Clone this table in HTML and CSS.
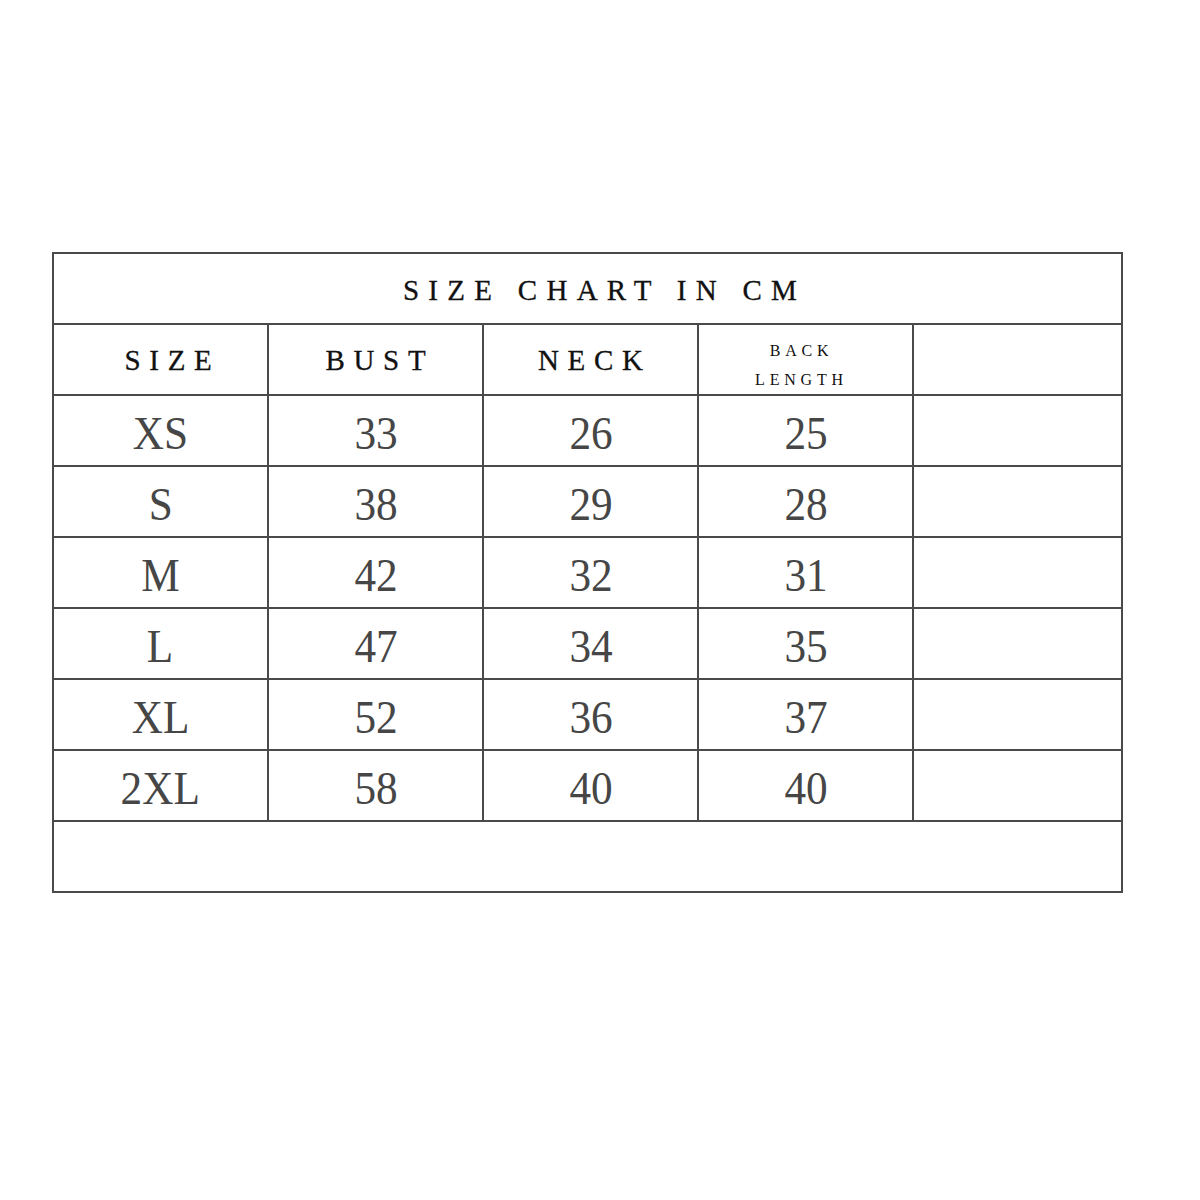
FILE: index.html
```html
<!DOCTYPE html>
<html>
<head>
<meta charset="utf-8">
<link rel="stylesheet" href="styles.css">
</head>
<body>
<div class="page">
  <table class="chart">
    <colgroup>
      <col class="c"><col class="c"><col class="c"><col class="c"><col class="c-last">
    </colgroup>
    <tr class="title-row"><td colspan="5" class="title">SIZE CHART IN CM</td></tr>
    <tr class="head-row">
      <td class="head shift">SIZE</td>
      <td class="head">BUST</td>
      <td class="head">NECK</td>
      <td class="head small">BACK<br>LENGTH</td>
      <td class="head"></td>
    </tr>
    <tr><td><span class="v">XS</span></td><td><span class="v">33</span></td><td><span class="v">26</span></td><td><span class="v">25</span></td><td></td></tr>
    <tr><td><span class="v">S</span></td><td><span class="v">38</span></td><td><span class="v">29</span></td><td><span class="v">28</span></td><td></td></tr>
    <tr><td><span class="v">M</span></td><td><span class="v">42</span></td><td><span class="v">32</span></td><td><span class="v">31</span></td><td></td></tr>
    <tr><td><span class="v">L</span></td><td><span class="v">47</span></td><td><span class="v">34</span></td><td><span class="v">35</span></td><td></td></tr>
    <tr><td><span class="v">XL</span></td><td><span class="v">52</span></td><td><span class="v">36</span></td><td><span class="v">37</span></td><td></td></tr>
    <tr><td><span class="v">2XL</span></td><td><span class="v">58</span></td><td><span class="v">40</span></td><td><span class="v">40</span></td><td></td></tr>
    <tr class="empty-row"><td colspan="5"></td></tr>
  </table>
</div>
</body>
</html>
```
FILE: styles.css
```css
html, body {
  margin: 0;
  padding: 0;
  background: #ffffff;
}
.page {
  padding: 252px 0 0 52px;
}
.chart {
  border-collapse: collapse;
  table-layout: fixed;
  width: 1069px;
  font-family: "Liberation Serif", "DejaVu Serif", serif;
}
.c { width: 215px; }
.c-last { width: 209px; }
.chart td {
  border: 2px solid #4a4a4a;
  height: 69px;
  padding: 0;
  text-align: center;
  vertical-align: middle;
}
.title {
  font-size: 29px;
  letter-spacing: 0.32em;
  color: #111;
  height: 65px !important;
  padding: 4px 0 0 34px !important;
  -webkit-text-stroke: 0.3px #111;
}
.head {
  font-size: 29px;
  letter-spacing: 0.3em;
  color: #111;
  height: 67px !important;
  padding: 2px 0 0 0.3em !important;
  -webkit-text-stroke: 0.3px #111;
}
.head.shift {
  padding-left: 24px !important;
}
.head.small {
  font-size: 16px;
  letter-spacing: 0.3em;
  line-height: 29px;
  height: 59px !important;
  padding: 10px 8px 0 0 !important;
  -webkit-text-stroke: 0;
}
.v {
  display: inline-block;
  font-size: 46px;
  color: #464646;
  transform: scaleX(0.94);
  position: relative;
  top: 3px;
}
```
